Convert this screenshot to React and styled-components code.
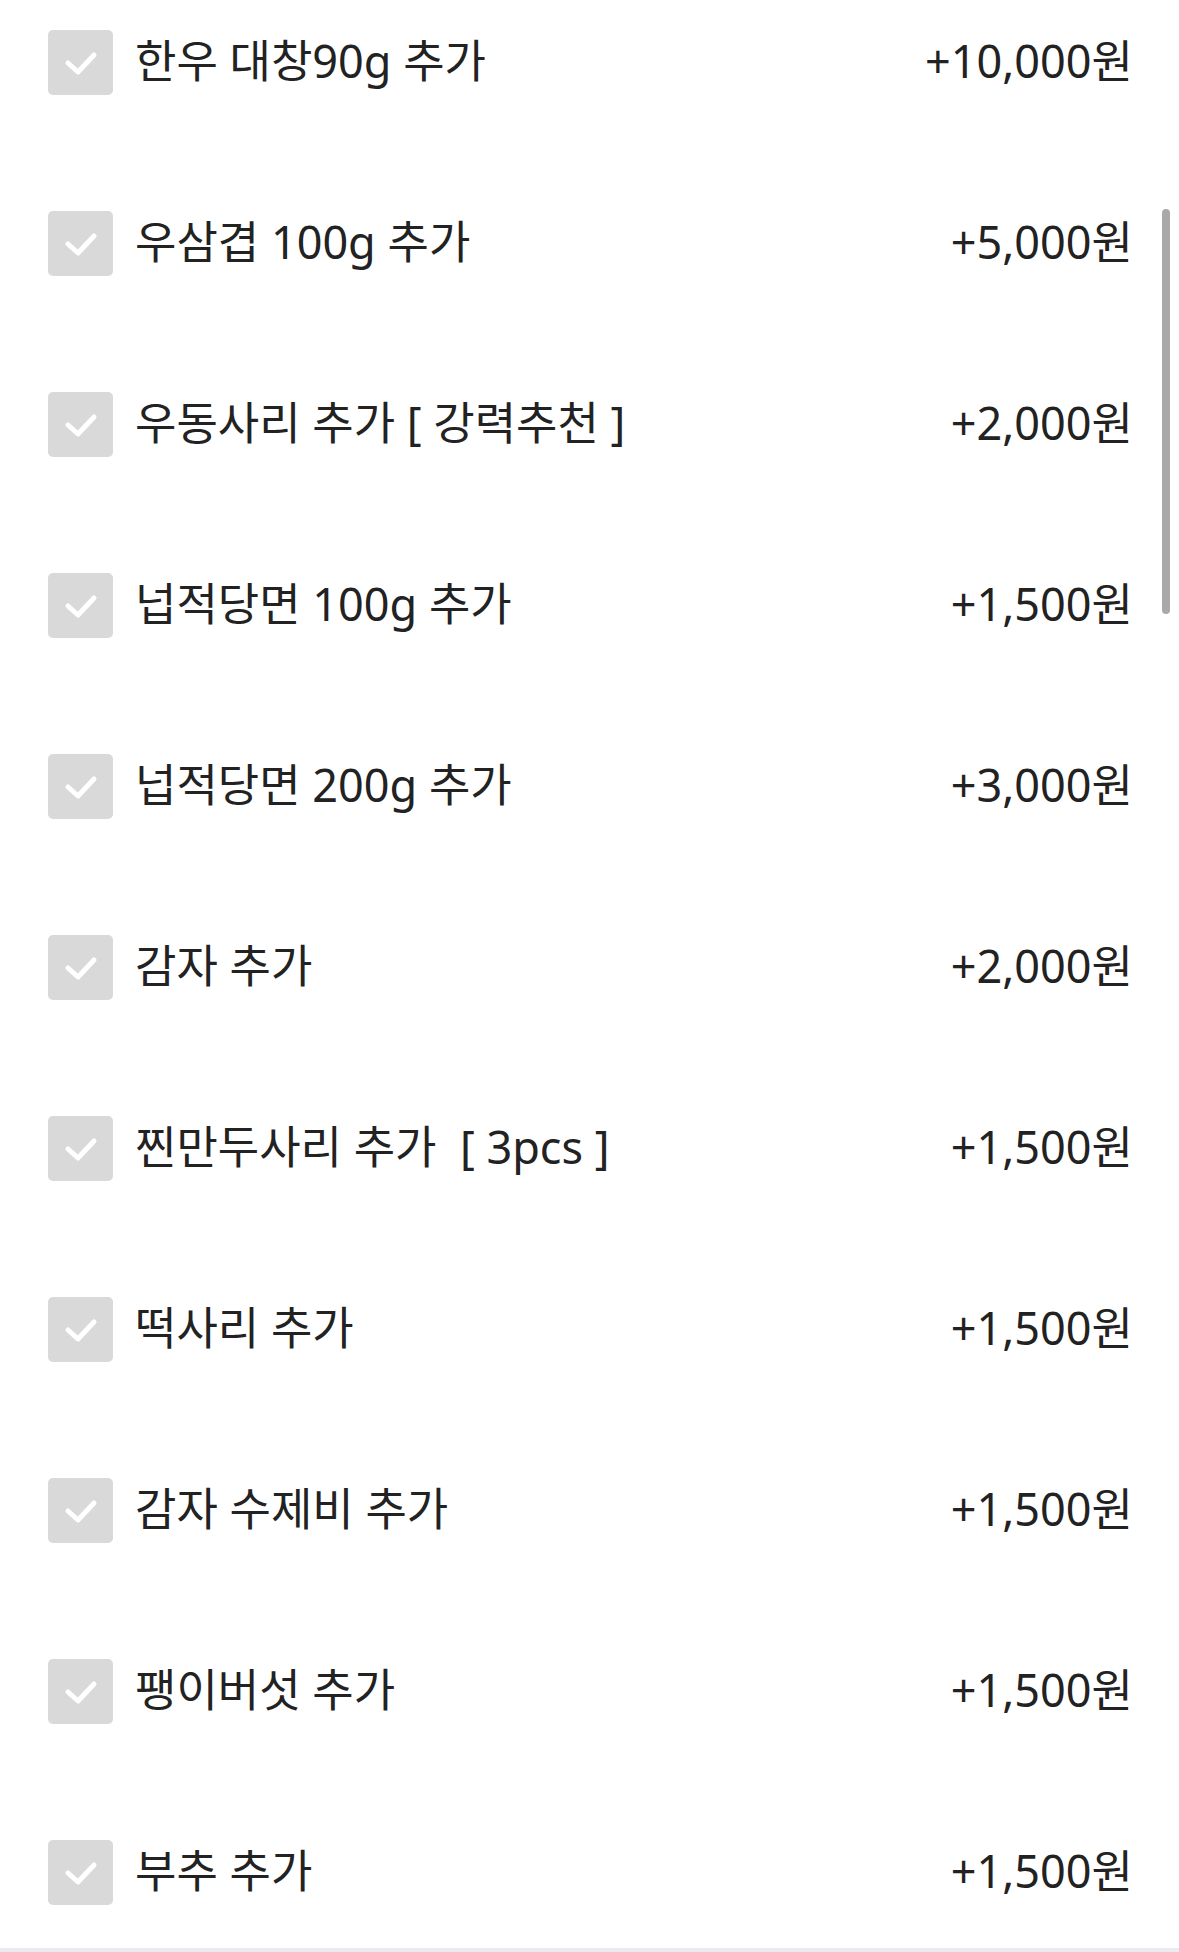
import React from 'react';
import styled, { createGlobalStyle } from 'styled-components';

const GlobalStyle = createGlobalStyle`
  html, body {
    margin: 0;
    padding: 0;
    background: #ffffff;
  }
  body {
    font-family: "Noto Sans", "Noto Sans CJK KR", sans-serif;
    color: #222222;
  }
`;

const Page = styled.div`
  position: relative;
  height: 1952px;
  display: flex;
  flex-direction: column;
  overflow: hidden;
`;

const ScrollArea = styled.div`
  flex: 1;
  overflow: hidden;
`;

const OptionList = styled.ul`
  list-style: none;
  margin: -28px 0 0;
  padding: 0 46px 0 48px;
`;

const OptionRow = styled.li`
  height: 181px;
  display: flex;
  align-items: center;
`;

const CheckBox = styled.span`
  flex: none;
  width: 65px;
  height: 65px;
  border-radius: 5px;
  background: #d9d9d9;
  display: flex;
  align-items: center;
  justify-content: center;
`;

const Label = styled.span`
  flex: 1;
  margin-left: 22px;
  padding-bottom: 4px;
  font-size: 45px;
  line-height: 1;
  white-space: pre;
  color: #222222;
`;

const Price = styled.span`
  flex: none;
  padding-bottom: 4px;
  font-size: 45px;
  line-height: 1;
  color: #222222;
`;

const ScrollThumb = styled.div`
  position: absolute;
  top: 209px;
  right: 9px;
  width: 8px;
  height: 405px;
  border-radius: 4px;
  background: #a9a9a9;
`;

const BottomBar = styled.div`
  flex: none;
  height: 4px;
  background: #e9ebee;
`;

const CheckIcon = () => (
  <svg width="40" height="30" viewBox="0 0 40 30">
    <path
      d="M7 15 L17 24 L33 7"
      fill="none"
      stroke="#ffffff"
      strokeWidth="5"
      strokeLinecap="round"
      strokeLinejoin="round"
    />
  </svg>
);

const options = [
  { name: '한우 대창90g 추가', price: '+10,000원' },
  { name: '우삼겹 100g 추가', price: '+5,000원' },
  { name: '우동사리 추가 [ 강력추천 ]', price: '+2,000원' },
  { name: '넙적당면 100g 추가', price: '+1,500원' },
  { name: '넙적당면 200g 추가', price: '+3,000원' },
  { name: '감자 추가', price: '+2,000원' },
  { name: '찐만두사리 추가  [ 3pcs ]', price: '+1,500원' },
  { name: '떡사리 추가', price: '+1,500원' },
  { name: '감자 수제비 추가', price: '+1,500원' },
  { name: '팽이버섯 추가', price: '+1,500원' },
  { name: '부추 추가', price: '+1,500원' },
];

export default function App() {
  return (
    <>
      <GlobalStyle />
      <Page>
        <ScrollArea>
          <OptionList>
            {options.map((o) => (
              <OptionRow key={o.name}>
                <CheckBox>
                  <CheckIcon />
                </CheckBox>
                <Label>{o.name}</Label>
                <Price>{o.price}</Price>
              </OptionRow>
            ))}
          </OptionList>
        </ScrollArea>
        <BottomBar />
        <ScrollThumb />
      </Page>
    </>
  );
}
